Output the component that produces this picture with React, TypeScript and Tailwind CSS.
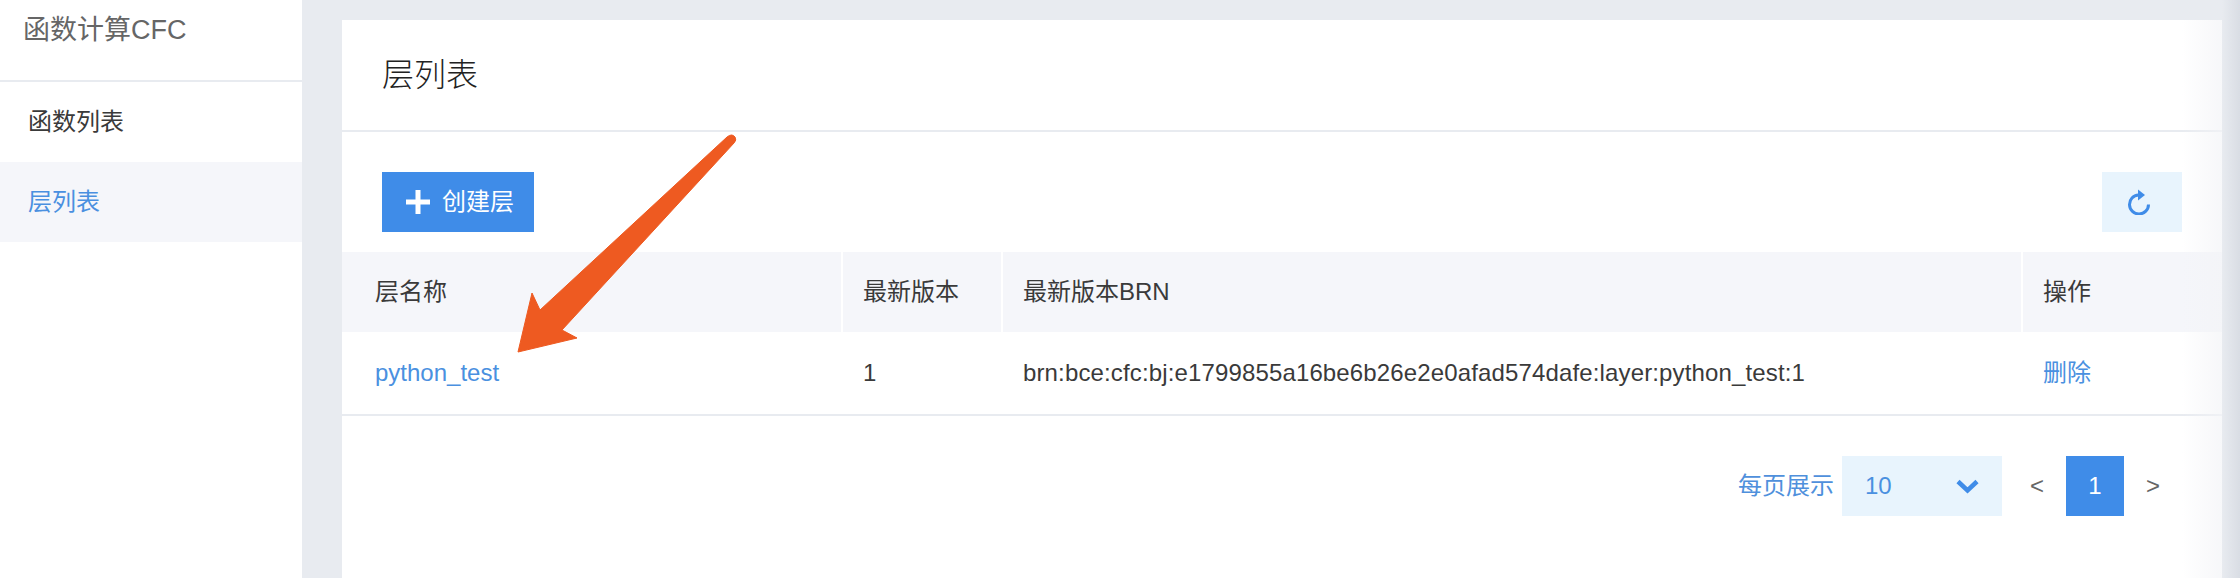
const fontStack = { fontFamily: '"Liberation Sans", "Noto Sans CJK SC", sans-serif' };

function Arrow() {
  return (
    <svg
      className="absolute left-[168px] top-[105px] pointer-events-none"
      width="230"
      height="240"
      viewBox="510 125 230 240"
    >
      <path
        d="M518 352 L532 293 L540 310 L727 137 Q732 133 735 137 Q737 140 734 143 L562 330 L577 338 Z"
        fill="#ee5a21"
        stroke="#ee5a21"
        strokeWidth="1"
        strokeLinejoin="round"
      />
    </svg>
  );
}

export default function App() {
  return (
    <div
      className="flex h-[578px] w-[2240px] overflow-hidden bg-[#e8ebf0] text-[24px] text-[#3a3a3a]"
      style={fontStack}
    >
      {/* sidebar */}
      <aside className="w-[302px] shrink-0 bg-white">
        <div className="h-[82px] border-b-2 border-[#e8ebf0] pl-[23px] pt-[9px] text-[27px] leading-[42px] text-[#666]">
          函数计算CFC
        </div>
        <div className="flex h-[80px] items-center pl-[28px]">函数列表</div>
        <div className="flex h-[80px] items-center bg-[#f5f6fa] pl-[28px] text-[#4a90e0]">层列表</div>
      </aside>

      {/* content */}
      <main className="flex flex-1 pl-10 pt-5">
        <div className="relative flex-1 bg-white">
          <div className="flex h-[112px] items-center border-b-2 border-[#e8ebf0] pl-10 text-[32px] font-light text-[#222]">
            层列表
          </div>

          <div className="flex items-center justify-between pb-5 pl-10 pr-10 pt-10">
            <button className="flex h-[60px] w-[152px] items-center bg-[#3f8ce8] pl-6 text-white">
              <svg width="24" height="24" viewBox="0 0 24 24" fill="#fff">
                <path d="M9.500 0h5v9.500H24v5h-9.500V24h-5v-9.500H0v-5h9.500z" />
              </svg>
              <span className="ml-3">创建层</span>
            </button>
            <button className="flex h-[60px] w-[80px] items-center justify-center bg-[#e8f4fd]">
              <svg className="mr-[6px]" width="24" height="26" viewBox="0 0 24 26" fill="none">
                <path d="M11.500 6 A9.500 9.500 0 1 0 21.500 15.500" stroke="#3f8ce8" strokeWidth="3" />
                <path d="M11 0.500 L18 6 L11 11.500 Z" fill="#3f8ce8" />
              </svg>
            </button>
          </div>

          <div className="grid h-[80px] grid-cols-[499px_160px_1020px_1fr] items-stretch bg-[#f5f6fa]">
            <div className="flex items-center pl-[33px]">层名称</div>
            <div className="flex items-center border-l-2 border-white pl-[20px]">最新版本</div>
            <div className="flex items-center border-l-2 border-white pl-[20px]">最新版本BRN</div>
            <div className="flex items-center border-l-2 border-white pl-[20px]">操作</div>
          </div>
          <div className="grid h-[84px] grid-cols-[499px_160px_1020px_1fr] items-center border-b-2 border-[#e8ebf0]">
            <div className="pl-[33px] text-[#4a90e0]">python_test</div>
            <div className="pl-[22px]">1</div>
            <div className="pl-[22px] tracking-[0.14px]">brn:bce:cfc:bj:e1799855a16be6b26e2e0afad574dafe:layer:python_test:1</div>
            <div className="pl-[22px] text-[#4a90e0]">删除</div>
          </div>

          <div className="flex items-center justify-end pr-[98px] pt-10">
            <span className="mr-2 text-[#4f90dc]">每页展示</span>
            <div className="flex h-[60px] w-[160px] items-center justify-between bg-[#e8f4fd] pl-[23px] pr-[23px] text-[#4a90e0]">
              <span>10</span>
              <svg width="23" height="15" viewBox="0 0 23 15" fill="none">
                <path d="M2 2.500 L11.500 11.500 L21 2.500" stroke="#3f8ce8" strokeWidth="4.500" />
              </svg>
            </div>
            <span className="ml-[64px] w-0 -translate-x-[36px] text-[#666]">&lt;</span>
            <div className="flex h-[60px] w-[58px] items-center justify-center bg-[#3f8ce8] text-white">1</div>
            <span className="w-0 translate-x-[22px] text-[#666]">&gt;</span>
          </div>

          <Arrow />
          {/* fade at the right edge */}
          <div className="absolute inset-y-0 right-0 w-[40px] bg-gradient-to-r from-white/0 to-[#f3f4f7]/70 pointer-events-none" />
        </div>
        <div className="mt-[-20px] w-[18px] shrink-0 bg-gradient-to-r from-[#e8ebf0] to-[#d9dde4]" />
      </main>
    </div>
  );
}
